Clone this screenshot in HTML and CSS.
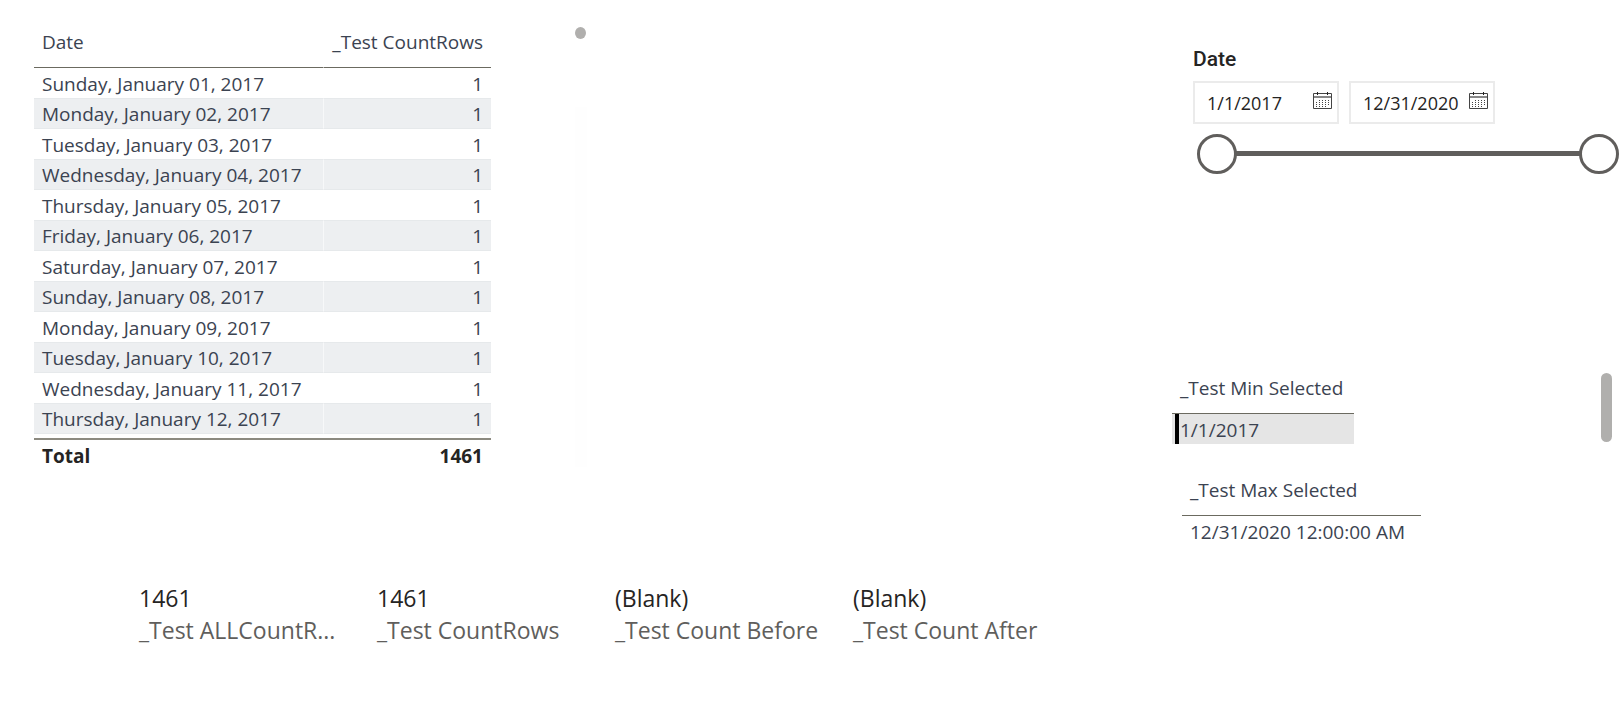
FILE: index.html
```html
<!DOCTYPE html>
<html lang="en">
<head>
    <meta charset="UTF-8">
    <meta name="viewport" content="width=device-width, initial-scale=1.0">
    <title>Date Count Report</title>
    <link rel="stylesheet" href="styles.css">
</head>
<body>
    <div class="report">
        <main class="left">
            <div class="table-visual">
                <table class="data-table count-table">
                    <thead>
                        <tr><th>Date</th><th>_Test CountRows</th></tr>
                    </thead>
                    <tbody>
                        <tr><td>Sunday, January 01, 2017</td><td>1</td></tr>
                        <tr><td>Monday, January 02, 2017</td><td>1</td></tr>
                        <tr><td>Tuesday, January 03, 2017</td><td>1</td></tr>
                        <tr><td>Wednesday, January 04, 2017</td><td>1</td></tr>
                        <tr><td>Thursday, January 05, 2017</td><td>1</td></tr>
                        <tr><td>Friday, January 06, 2017</td><td>1</td></tr>
                        <tr><td>Saturday, January 07, 2017</td><td>1</td></tr>
                        <tr><td>Sunday, January 08, 2017</td><td>1</td></tr>
                        <tr><td>Monday, January 09, 2017</td><td>1</td></tr>
                        <tr><td>Tuesday, January 10, 2017</td><td>1</td></tr>
                        <tr><td>Wednesday, January 11, 2017</td><td>1</td></tr>
                        <tr><td>Thursday, January 12, 2017</td><td>1</td></tr>
                    </tbody>
                    <tfoot>
                        <tr><td>Total</td><td>1461</td></tr>
                    </tfoot>
                </table>
                <div class="scrollbar"><div class="scroll-dot"></div></div>
            </div>

            <div class="cards">
                <div class="card">
                    <div class="card-value">1461</div>
                    <div class="card-label">_Test ALLCountR...</div>
                </div>
                <div class="card">
                    <div class="card-value">1461</div>
                    <div class="card-label">_Test CountRows</div>
                </div>
                <div class="card">
                    <div class="card-value">(Blank)</div>
                    <div class="card-label">_Test Count Before</div>
                </div>
                <div class="card">
                    <div class="card-value">(Blank)</div>
                    <div class="card-label">_Test Count After</div>
                </div>
            </div>
        </main>

        <aside class="right">
            <section class="slicer">
                <h2>Date</h2>
                <div class="date-boxes">
                    <div class="date-box">
                        <input type="text" value="1/1/2017" aria-label="Start date">
                        <button type="button" aria-label="Pick start date">
                            <svg width="19" height="18" viewBox="0 0 19 18">
                                <path d="M.5 1.5h18v15H.5z" fill="none" stroke="#444" />
                                <path d="M1 5h17" stroke="#888" stroke-width="2" />
                                <path d="M4.5 0v3M14.5 0v3" stroke="#222" />
                                <path d="M3.5 10v5M6.5 8v7M9.5 8v7M12.5 8v7M15.5 8v5" stroke="#444" stroke-dasharray="1 1" />
                            </svg>
                        </button>
                    </div>
                    <div class="date-box">
                        <input type="text" value="12/31/2020" aria-label="End date">
                        <button type="button" aria-label="Pick end date">
                            <svg width="19" height="18" viewBox="0 0 19 18">
                                <path d="M.5 1.5h18v15H.5z" fill="none" stroke="#444" />
                                <path d="M1 5h17" stroke="#888" stroke-width="2" />
                                <path d="M4.5 0v3M14.5 0v3" stroke="#222" />
                                <path d="M3.5 10v5M6.5 8v7M9.5 8v7M12.5 8v7M15.5 8v5" stroke="#444" stroke-dasharray="1 1" />
                            </svg>
                        </button>
                    </div>
                </div>
                <div class="slider">
                    <input type="range" min="0" max="1460" value="0" aria-label="Range start">
                    <input type="range" min="0" max="1460" value="1460" aria-label="Range end">
                </div>
            </section>

            <div class="min-visual">
                <table class="data-table min-table">
                    <thead>
                        <tr><th>_Test Min Selected</th></tr>
                    </thead>
                    <tbody>
                        <tr><td>1/1/2017</td></tr>
                    </tbody>
                </table>
                <div class="scroll-thumb"></div>
            </div>

            <table class="data-table max-table">
                <thead>
                    <tr><th>_Test Max Selected</th></tr>
                </thead>
                <tbody>
                    <tr><td>12/31/2020 12:00:00 AM</td></tr>
                </tbody>
            </table>
        </aside>
    </div>
</body>
</html>
```
FILE: styles.css
```css
* {
    box-sizing: border-box;
}
body {
    font-family: 'Segoe UI', 'Open Sans', 'Noto Sans', sans-serif;
    background-color: #ffffff;
    margin: 0;
    color: #252423;
}
.report {
    display: flex;
    justify-content: space-between;
    align-items: flex-start;
}
.left {
    padding: 17px 0 0 34px;
}
.table-visual {
    display: flex;
    gap: 84px;
}

/* tables */
.data-table {
    border-collapse: separate;
    border-spacing: 0;
    font-size: 19px;
    line-height: 28px;
    color: #3b4351;
}
.data-table th,
.data-table td {
    padding: 0 8px;
    text-align: left;
    font-weight: 400;
    white-space: nowrap;
}
.data-table th {
    height: 51px;
    border-bottom: 1px solid #6b6a60;
}
.data-table td {
    height: 30px;
    padding-top: 1px;
}
.count-table {
    width: 457px;
}
.count-table th:first-child,
.count-table td:first-child {
    width: 292px;
    border-right: 1px solid #ffffff;
}
.count-table th:last-child,
.count-table td:last-child {
    text-align: right;
}
.count-table tbody tr:nth-child(even) td {
    height: 31px;
    background-color: #edeff1;
    background-clip: padding-box;
    border-top: 1px solid #e6e9eb;
    border-bottom: 1px solid #e6e9eb;
}
.count-table tbody tr:nth-child(even) td:first-child {
    border-right-color: #f7f8f9;
}
.count-table tfoot td {
    height: 38px;
    font-weight: 700;
    color: #252423;
    background: linear-gradient(#8c8a80, #8c8a80) 0 4px / 100% 2px no-repeat;
    background-origin: border-box;
    padding-top: 5px;
}
.count-table tfoot td:first-child {
    border-right: none;
}
.scrollbar {
    width: 12px;
    padding-top: 10px;
    background: linear-gradient(#fefefe, #fefefe) 0 90px / 100% 360px no-repeat;
}
.scroll-dot {
    width: 11px;
    height: 12px;
    border-radius: 50%;
    background-color: #b0afad;
}

/* cards */
.cards {
    display: flex;
    gap: 27px;
    margin-top: 110px;
    padding-left: 105px;
    font-size: 23px;
    line-height: 32px;
}
.card {
    width: 211px;
}
.card-label {
    color: #605e5c;
    white-space: nowrap;
}

/* date slicer */
.right {
    width: 451px;
    padding-top: 45px;
}
.slicer {
    padding: 0 4px 0 21px;
}
.slicer h2 {
    margin: 0 0 8px;
    font-family: Roboto, sans-serif;
    font-size: 21px;
    font-weight: 500;
    line-height: 28px;
}
.date-boxes {
    display: flex;
    gap: 10px;
}
.date-box {
    display: flex;
    align-items: flex-start;
    width: 146px;
    height: 43px;
    border: 2px solid #ebebeb;
}
.date-box input {
    flex: 1;
    min-width: 0;
    height: 39px;
    border: none;
    outline: none;
    padding: 0 0 0 12px;
    background: none;
    font-family: inherit;
    font-size: 18px;
    color: #252423;
}
.date-box button {
    border: none;
    background: none;
    padding: 9px 5px 0 0;
    line-height: 0;
    cursor: pointer;
}
.slider {
    position: relative;
    height: 40px;
    margin: 10px 0 0 4px;
    background: linear-gradient(#605e5c, #605e5c) center 17px / calc(100% - 40px) 5px no-repeat;
}
.slider input {
    position: absolute;
    left: 0;
    top: 0;
    width: 100%;
    height: 40px;
    margin: 0;
    background: none;
    appearance: none;
    pointer-events: none;
}
.slider input::-webkit-slider-thumb {
    appearance: none;
    width: 40px;
    height: 40px;
    border: 3px solid #605e5c;
    border-radius: 50%;
    background-color: #ffffff;
    pointer-events: auto;
    cursor: pointer;
}

/* selected date tables */
.min-visual {
    display: flex;
    justify-content: space-between;
    align-items: flex-start;
    margin-top: 199px;
    padding-right: 11px;
}
.min-table {
    width: 182px;
    margin-top: -10px;
}
.min-table td {
    background: linear-gradient(#000000, #000000) 3px 0 / 4px 100% no-repeat #e5e5e5;
}
.scroll-thumb {
    width: 11px;
    height: 69px;
    border-radius: 6px;
    background-color: #b0afad;
}
.max-table {
    width: 239px;
    margin: 21px 0 0 10px;
}
```
